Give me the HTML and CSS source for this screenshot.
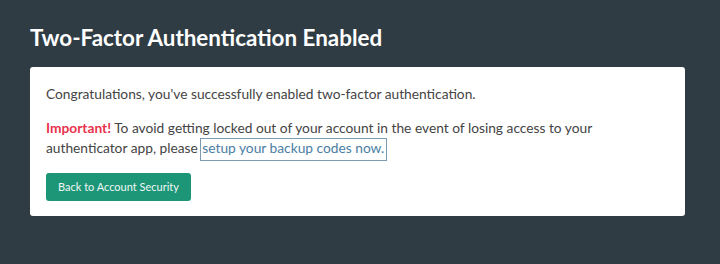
FILE: index.html
```html
<!DOCTYPE html>
<html>
<head>
<meta charset="utf-8">
<link rel="stylesheet" href="styles.css">
</head>
<body>
<main class="page">
  <h1 class="title">Two-Factor Authentication Enabled</h1>
  <section class="card">
    <p class="text">Congratulations, you've successfully enabled two-factor authentication.</p>
    <p class="text"><strong class="important">Important!</strong> To avoid getting locked out of your account in the event of losing access to your authenticator app, please <a class="link" href="#">setup your backup codes now.</a></p>
    <a class="btn" href="#">Back to Account Security</a>
  </section>
</main>
</body>
</html>
```
FILE: styles.css
```css
html, body {
  margin: 0;
  padding: 0;
  background: #2f3c44;
}
body {
  font-family: Lato, "Noto Sans", sans-serif;
  width: 720px;
  height: 264px;
  overflow: hidden;
}
.page {
  padding: 25px 35px 0 30px;
}
.title {
  margin: 0 0 16px 0;
  font-size: 22.4px;
  font-weight: 700;
  line-height: 26px;
  color: #ffffff;
}
.card {
  background: #ffffff;
  border-radius: 3px;
  padding: 17px 16px 15px 16px;
}
.text {
  margin: 0 0 14px 0;
  font-size: 13.75px;
  line-height: 20px;
  color: #444444;
}
.text + .text {
  margin-bottom: 15px;
}
.important {
  color: #e8334d;
  font-weight: 700;
}
.link {
  color: #4a7ea3;
  text-decoration: none;
  outline: 1px solid #7b9bb3;
  padding: 0 2px 4px 1px;
}
.btn {
  display: inline-block;
  vertical-align: top;
  background: #1c9677;
  color: #f2f7f5;
  font-size: 11px;
  line-height: 28px;
  padding: 0 12px;
  border-radius: 3px;
  text-decoration: none;
}
```
